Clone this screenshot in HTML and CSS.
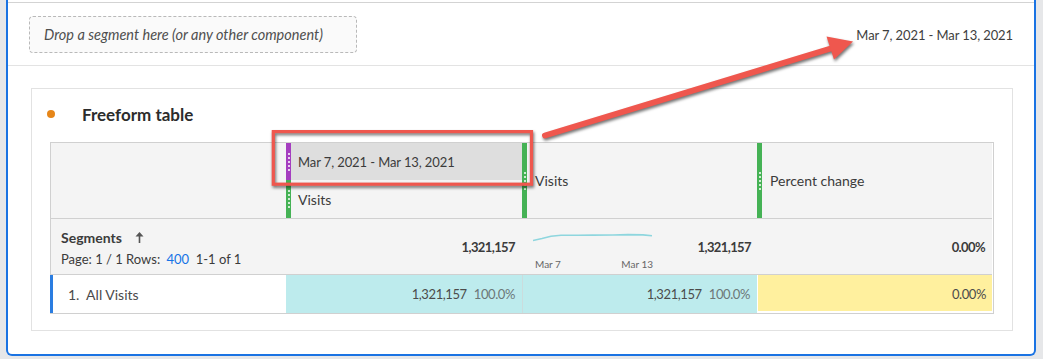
FILE: index.html
```html
<!DOCTYPE html>
<html lang="en">
<head>
  <meta charset="UTF-8" />
  <title>Freeform table</title>
  <link rel="stylesheet" href="styles.css">
</head>
<body>
  <div class="frame">
    <div class="frame-head">
      <div class="dropzone">Drop a segment here (or any other component)</div>
      <div class="range">Mar 7, 2021 - Mar 13, 2021</div>
    </div>

    <div class="frame-body">
      <section class="viz">
        <div class="viz-title">
          <span class="dot"></span>
          <h2>Freeform table</h2>
        </div>

        <div class="ftable">
          <!-- header -->
          <div class="hcell"></div>
          <div class="hcell stack">
            <div class="hpart date">
              <span class="bar purple"><i></i></span>
              <span class="hlabel narrow">Mar 7, 2021 - Mar 13, 2021</span>
            </div>
            <div class="hpart metric">
              <span class="bar"><i></i></span>
              <span class="hlabel">Visits</span>
            </div>
          </div>
          <div class="hcell">
            <span class="bar"><i></i></span>
            <span class="hlabel">Visits</span>
          </div>
          <div class="hcell">
            <span class="bar"><i></i></span>
            <span class="hlabel">Percent change</span>
          </div>

          <!-- totals -->
          <div class="tcell dims">
            <div class="dim-name">Segments
              <svg class="sort" width="9" height="11" viewBox="0 0 9 11"><path d="M4.5 0 L8.5 4.5 H5.3 V11 H3.7 V4.5 H0.5 Z" fill="#555"/></svg>
            </div>
            <div class="pager">Page: 1 / 1 Rows: <a href="#">400</a>&nbsp; 1-1 of 1</div>
          </div>
          <div class="tcell num">1,321,157</div>
          <div class="tcell spark">
            <div class="trend">
              <svg width="120" height="12" viewBox="0 0 120 12">
                <polyline points="0,9.5 9,7.5 18,5.2 28,4.2 45,4.3 60,4.1 80,4 95,3.6 110,3.9 119,4.8" fill="none" stroke="#8ed6de" stroke-width="1.6"/>
              </svg>
              <div class="trend-axis"><span>Mar 7</span><span>Mar 13</span></div>
            </div>
            <span class="num">1,321,157</span>
          </div>
          <div class="tcell num">0.00%</div>

          <!-- rows -->
          <div class="rcell first">1.&nbsp; All Visits</div>
          <div class="rcell teal"><span>1,321,157</span><span class="pct">100.0%</span></div>
          <div class="rcell teal sep"><span>1,321,157</span><span class="pct">100.0%</span></div>
          <div class="rcell yellow">0.00%</div>
        </div>
      </section>
    </div>
  </div>

  <svg class="annotation" width="1043" height="359" viewBox="0 0 1043 359">
    <g fill="none" stroke="#ef574e" stroke-width="3.2" class="shade">
      <rect x="273.3" y="131.6" width="258.2" height="52.6"/>
    </g>
    <g class="shade">
      <line x1="545" y1="135.5" x2="834" y2="47.5" stroke="#ef574e" stroke-width="6" stroke-linecap="round"/>
      <polygon points="853,41.5 826.5,36.5 834,59.5" fill="#ef574e"/>
    </g>
  </svg>
</body>
</html>
```

FILE: styles.css
```css
body {
  margin: 0;
  background: #e6e7e9;
  font-family: 'Lato', 'Liberation Sans', sans-serif;
  color: #4b4b4b;
}

.frame {
  box-sizing: border-box;
  margin-left: 6px;
  width: 1030px;
  height: 356px;
  padding-top: 2px;
  background: #fff;
  border: 2px solid #1a73e3;
  border-top: none;
  border-radius: 0 0 6px 6px;
}

.frame-head {
  box-sizing: border-box;
  height: 64px;
  display: flex;
  align-items: center;
  justify-content: space-between;
  padding: 0 21px;
  border-top: 1px solid #d3d3d3;
  border-bottom: 1px solid #e3e3e3;
}

.dropzone {
  box-sizing: border-box;
  width: 328px;
  height: 37px;
  padding-left: 14px;
  line-height: 35px;
  font-size: 14.5px;
  font-style: italic;
  color: #4f4f4f;
  background: #fafafa;
  border: 1px dashed #b9b9b9;
  border-radius: 4px;
}

.range {
  font-size: 13px;
  letter-spacing: -0.1px;
  color: #3e3e3e;
  margin-top: 2px;
}

.frame-body {
  padding: 22px 21px 0 23px;
}

.viz {
  box-sizing: border-box;
  height: 243px;
  padding: 0 18px 16px;
  border: 1px solid #e2e2e2;
}

.viz-title {
  height: 53px;
  display: flex;
  align-items: center;
  margin-left: -3px;
  padding-bottom: 3px;
  box-sizing: border-box;
}

.dot {
  width: 8px;
  height: 8px;
  border-radius: 50%;
  background: #e68619;
  margin-right: 27px;
}

.viz-title h2 {
  margin: 0;
  font-size: 17px;
  font-weight: bold;
  color: #2c2c2c;
}

.ftable {
  display: grid;
  grid-template-columns: 235px 236px 235px 235px;
  grid-template-rows: 76px 56px 38px;
  border: 1px solid #d0d0d0;
}

/* header */
.hcell {
  display: flex;
  align-items: center;
  background: #f4f4f4;
  border-bottom: 1px solid #d0d0d0;
  font-size: 14px;
}

.hcell.stack {
  flex-direction: column;
  align-items: stretch;
}

.hpart {
  display: flex;
  align-items: center;
}

.hpart.date {
  height: 37px;
  background: #dedede;
}

.hpart.metric {
  flex: 1;
}

.bar {
  align-self: stretch;
  width: 5px;
  flex: none;
  background: #45b255;
  display: flex;
  align-items: center;
  justify-content: center;
}

.bar.purple {
  background: #a53ec0;
}

.bar i {
  height: 18px;
  border-left: 2px dotted rgba(255, 255, 255, 0.75);
}

.hlabel {
  padding-left: 7px;
  color: #3b3b3b;
}

.hlabel.narrow {
  font-size: 13px;
  letter-spacing: -0.1px;
}

.hcell > .hlabel {
  padding-left: 8px;
}

/* totals row */
.tcell {
  background: #f4f4f4;
  border-bottom: 1px solid #d0d0d0;
  font-size: 13px;
  font-weight: bold;
  color: #3b3b3b;
}

.tcell.num,
.spark .num {
  letter-spacing: -0.6px;
}

.tcell.num {
  display: flex;
  align-items: center;
  justify-content: flex-end;
  padding-right: 7px;
  padding-top: 1px;
}

.dims {
  padding: 9px 0 0 10px;
  font-weight: normal;
}

.dim-name {
  font-size: 14px;
  font-weight: bold;
  display: flex;
  align-items: center;
  gap: 13px;
  height: 18px;
}

.pager {
  margin-top: 5px;
}

.pager a {
  color: #1473e6;
  text-decoration: none;
  margin-left: 3px;
}

.spark {
  display: flex;
  justify-content: space-between;
  align-items: center;
  padding: 0 6px 0 11px;
}

.trend {
  width: 120px;
  padding-top: 8px;
}

.trend svg {
  display: block;
}

.trend-axis {
  display: flex;
  justify-content: space-between;
  margin-top: 15px;
  padding-left: 2px;
  font-size: 10px;
  font-weight: normal;
  letter-spacing: 0;
  color: #666;
}

/* data row */
.rcell {
  display: flex;
  align-items: center;
  justify-content: flex-end;
  gap: 7px;
  padding-right: 7px;
  font-size: 13px;
  letter-spacing: -0.4px;
  color: #4b4b4b;
}

.rcell.first {
  justify-content: flex-start;
  padding-left: 17px;
  font-size: 14px;
  letter-spacing: 0;
  background: #fff;
  box-shadow: -1px 0 0 #2a7de1, inset 2px 0 0 #2a7de1;
}

.rcell.teal {
  background: #bdebed;
}

.rcell.sep {
  border-left: 1px solid #cbdcdd;
}

.rcell .pct {
  color: #6c7778;
}

.rcell.yellow {
  background: #fff09e;
  box-shadow: inset 1px 0 0 #fff, inset 0 -2px 0 #fff;
  padding-right: 6px;
}

.annotation {
  position: absolute;
  top: 0;
  left: 0;
  pointer-events: none;
}

.shade {
  filter: drop-shadow(1px 2px 1.5px rgba(0, 0, 0, 0.55));
}
```
